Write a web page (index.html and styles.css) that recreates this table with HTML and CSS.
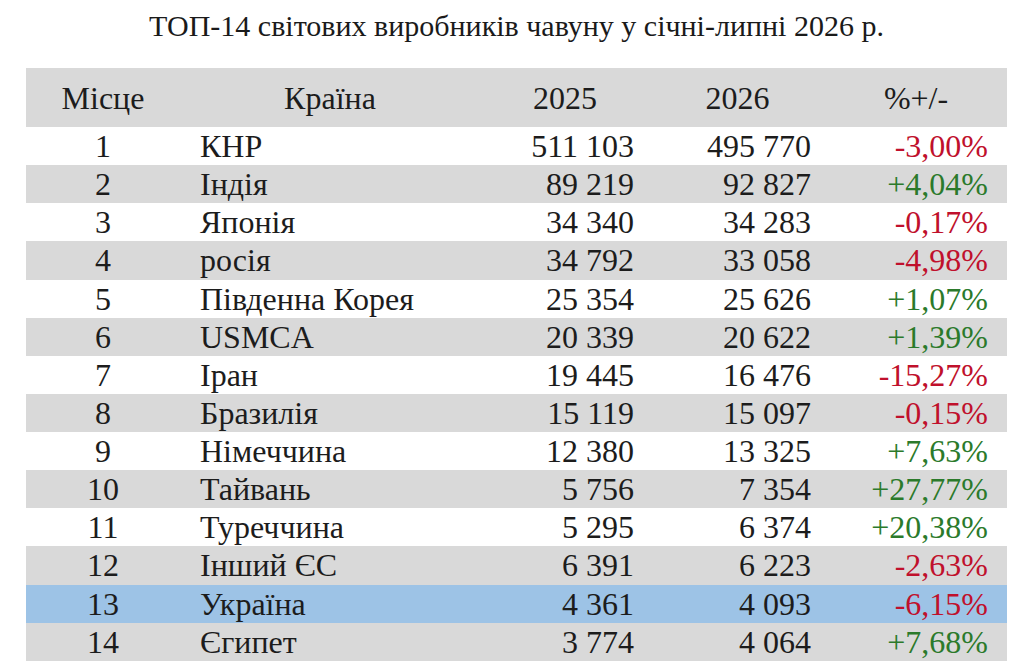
FILE: index.html
```html
<!DOCTYPE html>
<html lang="uk">
<head>
<meta charset="utf-8">
<title>ТОП-14 світових виробників чавуну</title>
<link rel="stylesheet" href="styles.css">
</head>
<body>
<main class="page">
  <h1 class="title">ТОП-14 світових виробників чавуну у січні-липні 2026 р.</h1>
  <table class="rank">
    <colgroup>
      <col class="c-place"><col class="c-country"><col class="c-y1"><col class="c-y2"><col class="c-pct">
    </colgroup>
    <thead>
      <tr><th>Місце</th><th>Країна</th><th>2025</th><th>2026</th><th>%+/-</th></tr>
    </thead>
    <tbody>
      <tr><td class="place">1</td><td class="country">КНР</td><td class="num n1">511 103</td><td class="num n2">495 770</td><td class="pct neg">-3,00%</td></tr>
      <tr><td class="place">2</td><td class="country">Індія</td><td class="num n1">89 219</td><td class="num n2">92 827</td><td class="pct pos">+4,04%</td></tr>
      <tr><td class="place">3</td><td class="country">Японія</td><td class="num n1">34 340</td><td class="num n2">34 283</td><td class="pct neg">-0,17%</td></tr>
      <tr><td class="place">4</td><td class="country">росія</td><td class="num n1">34 792</td><td class="num n2">33 058</td><td class="pct neg">-4,98%</td></tr>
      <tr><td class="place">5</td><td class="country">Південна Корея</td><td class="num n1">25 354</td><td class="num n2">25 626</td><td class="pct pos">+1,07%</td></tr>
      <tr><td class="place">6</td><td class="country">USMCA</td><td class="num n1">20 339</td><td class="num n2">20 622</td><td class="pct pos">+1,39%</td></tr>
      <tr><td class="place">7</td><td class="country">Іран</td><td class="num n1">19 445</td><td class="num n2">16 476</td><td class="pct neg">-15,27%</td></tr>
      <tr><td class="place">8</td><td class="country">Бразилія</td><td class="num n1">15 119</td><td class="num n2">15 097</td><td class="pct neg">-0,15%</td></tr>
      <tr><td class="place">9</td><td class="country">Німеччина</td><td class="num n1">12 380</td><td class="num n2">13 325</td><td class="pct pos">+7,63%</td></tr>
      <tr><td class="place">10</td><td class="country">Тайвань</td><td class="num n1">5 756</td><td class="num n2">7 354</td><td class="pct pos">+27,77%</td></tr>
      <tr><td class="place">11</td><td class="country">Туреччина</td><td class="num n1">5 295</td><td class="num n2">6 374</td><td class="pct pos">+20,38%</td></tr>
      <tr><td class="place">12</td><td class="country">Інший ЄС</td><td class="num n1">6 391</td><td class="num n2">6 223</td><td class="pct neg">-2,63%</td></tr>
      <tr class="highlight"><td class="place">13</td><td class="country">Україна</td><td class="num n1">4 361</td><td class="num n2">4 093</td><td class="pct neg">-6,15%</td></tr>
      <tr><td class="place">14</td><td class="country">Єгипет</td><td class="num n1">3 774</td><td class="num n2">4 064</td><td class="pct pos">+7,68%</td></tr>
    </tbody>
  </table>
</main>
</body>
</html>
```

FILE: styles.css
```css
html, body {
  margin: 0;
  padding: 0;
  background: #ffffff;
}

body {
  font-family: "Liberation Serif", "Times New Roman", Tinos, serif;
}

.page {
  padding: 8px 22px 0 26px;
  font-family: "Liberation Serif", "Times New Roman", Tinos, serif;
  color: #1c1c1c;
}

.title {
  margin: 0;
  height: 60px;
  font-family: "Liberation Serif", "Times New Roman", Tinos, serif;
  font-size: 30px;
  font-weight: normal;
  line-height: 36px;
  text-align: center;
  white-space: nowrap;
  color: #1a1a1a;
}

.rank {
  width: 981px;
  border-collapse: collapse;
  table-layout: fixed;
  font-family: "Liberation Serif", "Times New Roman", Tinos, serif;
  font-size: 32px;
}

.c-place { width: 154px; }
.c-country { width: 300px; }
.c-y1 { width: 170px; }
.c-y2 { width: 175px; }
.c-pct { width: 182px; }

.rank th {
  height: 59px;
  padding: 0;
  font-family: "Liberation Serif", "Times New Roman", Tinos, serif;
  font-weight: normal;
  text-align: center;
  background: #d9d9d9;
  line-height: 1;
}

.rank td {
  height: 38.14px;
  padding: 0;
  font-family: "Liberation Serif", "Times New Roman", Tinos, serif;
  line-height: 1;
  white-space: nowrap;
}

.rank tbody tr:nth-child(even) td {
  background: #d9d9d9;
}

.rank tbody tr.highlight td {
  background: #9dc3e6;
}

.place {
  text-align: center;
}

.rank td.country {
  padding-left: 20px;
}

.num, .pct {
  text-align: right;
}

.rank td.n1 { padding-right: 16px; }
.rank td.n2 { padding-right: 14px; }
.rank td.pct { padding-right: 19px; }

.neg { color: #c0102c; }
.pos { color: #2b7a2b; }
```
